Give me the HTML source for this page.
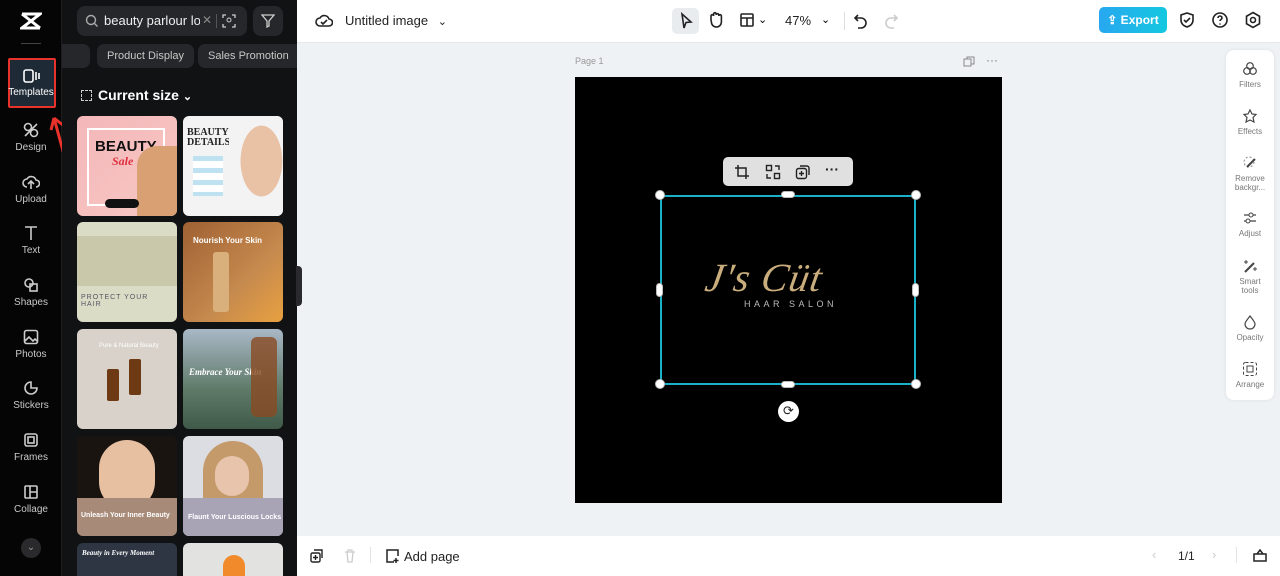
<!DOCTYPE html>
<html style="width:1280px;height:576px;overflow:hidden"><head><meta charset="utf-8"><style>
*{box-sizing:border-box;margin:0;padding:0}
body{width:1280px;height:576px;overflow:hidden;font-family:"Liberation Sans",sans-serif;background:#eff2f5;position:relative}
.abs{position:absolute}
#side{left:0;top:0;width:62px;height:576px;background:#050505;border-right:1px solid #1d1d1d}
.nav{position:absolute;left:0;width:62px;text-align:center;color:#c9c9c9;font-size:10px}
.nav svg{display:block;margin:0 auto 3px}
#panel{left:62px;top:0;width:235px;height:576px;background:#111214;overflow:hidden}
.chip{position:absolute;top:44px;height:24px;border-radius:7px;background:#26272a;color:#c8c8c8;font-size:11px;line-height:24px;padding:0 10px;white-space:nowrap;overflow:hidden}
.th{position:absolute;width:100px;height:100px;border-radius:6px;overflow:hidden}
#top{left:297px;top:0;width:983px;height:43px;background:#fff;border-bottom:1px solid #e6e8eb}
#bot{left:297px;top:536px;width:983px;height:40px;background:#fff}
.ic{stroke:#222;fill:none;stroke-width:1.6}
.rp{position:absolute;left:0;width:48px;text-align:center;font-size:8px;color:#777;line-height:9px}
.rp svg{display:block;margin:0 auto 3px}
.h{position:absolute;background:#fff;border:1px solid #bbb}
</style></head><body>
<div id="side" class="abs">
 <svg class="abs" style="left:20px;top:12px" width="22" height="18" viewBox="0 0 22 18"><path d="M2 2h18L2 16h18M2 2l18 14" stroke="#fff" stroke-width="3" fill="none"/></svg>
 <div class="abs" style="left:21px;top:43px;width:20px;height:1px;background:#444"></div>
 <div class="abs" style="left:8px;top:58px;width:48px;height:50px;background:#1e2a36;border:2px solid #e8322b;border-radius:2px"></div>
 <div class="nav" style="top:68px;color:#fff"><svg width="18" height="16" viewBox="0 0 18 16"><rect x="2" y="2" width="9" height="12" rx="2" stroke="#fff" fill="none" stroke-width="1.6"/><path d="M14 4v8M17 5v6" stroke="#fff" stroke-width="1.6"/></svg>Templates</div>
 <svg class="abs" style="left:48px;top:112px" width="22" height="52" viewBox="0 0 22 52"><path d="M18 50L6 6M6 6l-3 12M6 6l10 8" stroke="#e8322b" stroke-width="3" fill="none"/></svg>
 <div class="nav" style="top:121px">
  <svg width="18" height="18" viewBox="0 0 18 18"><circle cx="6" cy="6" r="3.5" class="ic" style="stroke:#ccc"/><circle cx="12" cy="12" r="3.5" class="ic" style="stroke:#ccc"/><path d="M3 15L15 3" class="ic" style="stroke:#ccc"/></svg>Design</div>
 <div class="nav" style="top:173px"><svg width="18" height="18" viewBox="0 0 18 18"><path d="M5 14a4 4 0 010-8 5 5 0 019 1 3.5 3.5 0 010 7M9 16V9M6 11l3-3 3 3" style="stroke:#ccc" class="ic"/></svg>Upload</div>
 <div class="nav" style="top:224px"><svg width="18" height="18" viewBox="0 0 18 18"><path d="M3 3h12M9 3v13" style="stroke:#ccc" class="ic"/></svg>Text</div>
 <div class="nav" style="top:276px"><svg width="18" height="18" viewBox="0 0 18 18"><circle cx="7" cy="7" r="4" style="stroke:#ccc" class="ic"/><rect x="8" y="8" width="7" height="7" style="stroke:#ccc" class="ic"/></svg>Shapes</div>
 <div class="nav" style="top:328px"><svg width="18" height="18" viewBox="0 0 18 18"><rect x="2.5" y="2.5" width="13" height="13" rx="2" style="stroke:#ccc" class="ic"/><path d="M3 13l4-4 4 4 2-2 2 2" style="stroke:#ccc" class="ic"/></svg>Photos</div>
 <div class="nav" style="top:379px"><svg width="18" height="18" viewBox="0 0 18 18"><path d="M15 9A6 6 0 119 3v6z" style="stroke:#ccc" class="ic"/></svg>Stickers</div>
 <div class="nav" style="top:431px"><svg width="18" height="18" viewBox="0 0 18 18"><rect x="3" y="3" width="12" height="12" rx="2" style="stroke:#ccc" class="ic"/><rect x="6" y="6" width="6" height="6" style="stroke:#ccc" class="ic"/></svg>Frames</div>
 <div class="nav" style="top:483px"><svg width="18" height="18" viewBox="0 0 18 18"><rect x="3" y="3" width="12" height="12" rx="1" style="stroke:#ccc" class="ic"/><path d="M8 3v12M8 9h7" style="stroke:#ccc" class="ic"/></svg>Collage</div>
 <div class="abs" style="left:21px;top:538px;width:20px;height:20px;border-radius:50%;background:#2a2a2c;color:#999;font-size:10px;text-align:center;line-height:20px">⌄</div>
</div>
<div id="panel" class="abs">
 <div class="abs" style="left:15px;top:6px;width:170px;height:30px;border-radius:8px;background:#26272a"></div>
 <div class="abs" style="left:42px;top:6px;width:96px;height:30px;color:#eee;font-size:13px;line-height:30px;white-space:nowrap;overflow:hidden">beauty parlour logo</div>
 <div class="abs" style="left:140px;top:13px;color:#888;font-size:12px">✕</div>
 <svg class="abs" style="left:23px;top:14px" width="14" height="14"><circle cx="6" cy="6" r="4.5" stroke="#aaa" fill="none" stroke-width="1.4"/><path d="M9.5 9.5l3 3" stroke="#aaa" stroke-width="1.4"/></svg>
 <div class="abs" style="left:154px;top:14px;width:1px;height:14px;background:#555"></div>
 <svg class="abs" style="left:160px;top:14px" width="14" height="14"><path d="M1 4V1h3M10 1h3v3M13 10v3h-3M4 13H1v-3" stroke="#ccc" fill="none" stroke-width="1.3"/><circle cx="7" cy="6" r="2" stroke="#ccc" fill="none"/></svg>
 <div class="abs" style="left:191px;top:6px;width:30px;height:30px;border-radius:8px;background:#26272a"></div>
 <svg class="abs" style="left:199px;top:14px" width="14" height="14"><path d="M1 1h12L8 7v5L6 13V7z" stroke="#ccc" fill="none" stroke-width="1.3"/></svg>
 <div class="chip" style="left:0;width:28px;border-radius:0 7px 7px 0"></div>
 <div class="chip" style="left:35px">Product Display</div>
 <div class="chip" style="left:136px;width:99px;border-radius:7px 0 0 7px">Sales Promotion</div>
 <div class="abs" style="left:19px;top:90px;width:11px;height:11px;border:1.5px dashed #ccc"></div>
 <div class="abs" style="left:36px;top:87px;color:#fff;font-size:14px;font-weight:bold">Current size <span style="font-size:11px">⌄</span></div>
 <div class="th" style="left:15px;top:116px;background:linear-gradient(135deg,#f4b7b9,#f7c8c4)"><div style="position:absolute;left:10px;top:12px;width:78px;height:78px;border:2px solid #fff"></div><div style="position:absolute;left:18px;top:22px;font:bold 15px 'Liberation Sans';color:#111">BEAUTY</div><div style="position:absolute;left:35px;top:38px;font:italic bold 12px 'Liberation Serif';color:#e03040">Sale</div><div style="position:absolute;left:60px;top:30px;width:40px;height:70px;background:#d9a173;border-radius:20px 0 0 0"></div><div style="position:absolute;left:28px;top:83px;width:34px;height:9px;background:#111;border-radius:5px"></div></div>
 <div class="th" style="left:121px;top:116px;background:#f3f3f3"><div style="position:absolute;left:4px;top:12px;font:bold 10px 'Liberation Serif';color:#222;line-height:10px">BEAUTY<br>DETAILS</div><div style="position:absolute;left:46px;top:0;width:54px;height:100px;background:radial-gradient(ellipse at 60% 45%,#e9c1a4 0 45%,#f3f3f3 46%)"></div><div style="position:absolute;left:10px;top:40px;width:30px;height:40px;background:repeating-linear-gradient(#bfe2f2 0 5px,#fff 5px 12px)"></div></div>
 <div class="th" style="left:15px;top:222px;background:#dbdcc5"><div style="position:absolute;left:0;top:14px;width:100px;height:50px;background:#c9c8ab"></div><div style="position:absolute;left:4px;top:72px;font-size:7px;color:#556;letter-spacing:1px">PROTECT YOUR<br>HAIR</div></div>
 <div class="th" style="left:121px;top:222px;background:linear-gradient(135deg,#a06033,#c58a4e 60%,#e8a040)"><div style="position:absolute;left:10px;top:14px;font:bold 8px 'Liberation Sans';color:#fff">Nourish Your Skin</div><div style="position:absolute;left:30px;top:30px;width:16px;height:60px;background:#d9b07c;border-radius:3px"></div></div>
 <div class="th" style="left:15px;top:329px;background:#d8d2cb"><div style="position:absolute;left:22px;top:14px;font-size:6px;color:#fff">Pure & Natural Beauty</div><div style="position:absolute;left:30px;top:40px;width:12px;height:32px;background:#6d3a14;border-radius:2px"></div><div style="position:absolute;left:52px;top:30px;width:12px;height:36px;background:#6d3a14;border-radius:2px"></div></div>
 <div class="th" style="left:121px;top:329px;background:linear-gradient(180deg,#a9b8c6,#5f7a69 60%,#3f5a48)"><div style="position:absolute;left:6px;top:38px;font:italic bold 9px 'Liberation Serif';color:#fff">Embrace Your Skin</div><div style="position:absolute;left:68px;top:8px;width:26px;height:80px;background:#8a4a22;border-radius:6px;opacity:.8"></div></div>
 <div class="th" style="left:15px;top:436px;background:#1a1410"><div style="position:absolute;left:22px;top:4px;width:56px;height:70px;border-radius:28px;background:#e7c0a2"></div><div style="position:absolute;left:0;top:62px;width:100px;height:38px;background:#a78a78"></div><div style="position:absolute;left:4px;top:76px;font:bold 7px 'Liberation Sans';color:#fff">Unleash Your Inner Beauty</div></div>
 <div class="th" style="left:121px;top:436px;background:#dcdde3"><div style="position:absolute;left:20px;top:5px;width:60px;height:90px;border-radius:30px;background:#c49a6b"></div><div style="position:absolute;left:32px;top:20px;width:34px;height:40px;border-radius:17px;background:#e8c4ac"></div><div style="position:absolute;left:0;top:62px;width:100px;height:38px;background:#a8a4b6"></div><div style="position:absolute;left:5px;top:78px;font:bold 7px 'Liberation Sans';color:#fff">Flaunt Your Luscious Locks</div></div>
 <div class="th" style="left:15px;top:543px;height:33px;border-radius:6px 6px 0 0;background:#2e3644"><div style="position:absolute;left:5px;top:6px;font:italic bold 7px 'Liberation Serif';color:#fff">Beauty in Every Moment</div></div>
 <div class="th" style="left:121px;top:543px;height:33px;border-radius:6px 6px 0 0;background:#e2e2e0"><div style="position:absolute;left:40px;top:12px;width:22px;height:21px;border-radius:11px 11px 0 0;background:#f08a2a"></div></div>
</div>
<div class="abs" style="left:296px;top:266px;width:6px;height:40px;background:#2a2a2c;border-radius:0 4px 4px 0"></div>
<div id="top" class="abs">
 <svg class="abs" style="left:18px;top:12px" width="18" height="18"><path d="M5 14a4 4 0 010-8 5 5 0 019 1 3.5 3.5 0 010 7z M6 10l2 2 4-4" class="ic"/></svg>
 <div class="abs" style="left:48px;top:13px;font-size:13px;color:#222">Untitled image <span style="font-size:11px;margin-left:6px">⌄</span></div>
 <div class="abs" style="left:375px;top:8px;width:27px;height:26px;border-radius:5px;background:#e9ecef"></div>
 <svg class="abs" style="left:381px;top:12px" width="16" height="18"><path d="M4 2l9 8-5 .5L6 16z" class="ic"/></svg>
 <svg class="abs" style="left:410px;top:11px" width="16" height="18"><path d="M4 9V5a1.3 1.3 0 012.6 0V3a1.3 1.3 0 012.6 0v1a1.3 1.3 0 012.6 0v1a1.3 1.3 0 012.6 0v6a5 5 0 01-10 0z" class="ic"/></svg>
 <svg class="abs" style="left:442px;top:12px" width="16" height="16"><rect x="2" y="2" width="12" height="12" rx="1" class="ic"/><path d="M2 6h12M8 6v8" class="ic"/></svg>
 <div class="abs" style="left:461px;top:13px;font-size:11px">⌄</div>
 <div class="abs" style="left:488px;top:13px;font-size:13px;color:#222">47%</div>
 <div class="abs" style="left:524px;top:13px;font-size:11px">⌄</div>
 <div class="abs" style="left:547px;top:12px;width:1px;height:18px;background:#ddd"></div>
 <svg class="abs" style="left:556px;top:12px" width="16" height="18"><path d="M5 3L2 6l3 3M2 6h6a5 5 0 010 10H5" class="ic"/></svg>
 <svg class="abs" style="left:586px;top:12px" width="16" height="18"><path d="M11 3l3 3-3 3M14 6H8a5 5 0 000 10h3" class="ic" style="stroke:#ccc"/></svg>
 <div class="abs" style="left:802px;top:7px;width:68px;height:26px;border-radius:5px;background:linear-gradient(90deg,#28a7f0,#14c8e0);color:#fff;font-size:12px;font-weight:bold;line-height:26px;text-align:center">⇪ Export</div>
 <svg class="abs" style="left:881px;top:11px" width="18" height="18"><path d="M9 2l6 2v5c0 4-3 6-6 7-3-1-6-3-6-7V4z M6 9l2 2 4-4" class="ic"/></svg>
 <svg class="abs" style="left:914px;top:11px" width="18" height="18"><circle cx="9" cy="9" r="7" class="ic"/><path d="M7 7a2 2 0 114 0c0 1.5-2 1.5-2 3" class="ic"/><circle cx="9" cy="13" r=".8" fill="#222"/></svg>
 <svg class="abs" style="left:947px;top:11px" width="18" height="18"><path d="M9 1.5l6.5 3.75v7.5L9 16.5 2.5 12.750v-7.5z" class="ic"/><circle cx="9" cy="9" r="2.5" class="ic"/></svg>
</div>
<div class="abs" style="left:575px;top:56px;font-size:9px;color:#999">Page 1</div>
<svg class="abs" style="left:963px;top:56px" width="12" height="12"><rect x="1" y="3" width="7" height="7" stroke="#888" fill="none"/><path d="M4 3V1h7v7H8" stroke="#888" fill="none"/></svg>
<div class="abs" style="left:986px;top:53px;font-size:12px;color:#777">···</div>
<div class="abs" style="left:575px;top:77px;width:427px;height:426px;background:#000"></div>
<div class="abs" style="left:723px;top:157px;width:130px;height:29px;background:#e0e0e0;border-radius:5px"></div>
<svg class="abs" style="left:734px;top:164px" width="16" height="16"><path d="M4 1v11h11M1 4h11v11" stroke="#222" fill="none" stroke-width="1.5"/></svg>
<svg class="abs" style="left:765px;top:164px" width="16" height="16"><rect x="1.5" y="1.5" width="5" height="5" stroke="#222" fill="none" stroke-width="1.4"/><rect x="9.5" y="9.5" width="5" height="5" stroke="#222" fill="none" stroke-width="1.4"/><path d="M10 2h4v4M2 10v4h4" stroke="#222" fill="none" stroke-width="1.4"/></svg>
<svg class="abs" style="left:795px;top:164px" width="16" height="16"><rect x="1.5" y="4.5" width="10" height="10" rx="2" stroke="#222" fill="none" stroke-width="1.4"/><path d="M5 2h7a2 2 0 012 2v7M6.5 7v5M4 9.5h5" stroke="#222" fill="none" stroke-width="1.4"/></svg>
<div class="abs" style="left:825px;top:161px;font-size:14px;font-weight:bold;color:#222">···</div>
<div class="abs" style="left:660px;top:195px;width:256px;height:190px;border:2px solid #1ab0c8"></div>
<div class="abs" style="left:655px;top:190px;width:10px;height:10px;border-radius:50%;background:#fff;border:1px solid #bbb"></div>
<div class="abs" style="left:911px;top:190px;width:10px;height:10px;border-radius:50%;background:#fff;border:1px solid #bbb"></div>
<div class="abs" style="left:655px;top:379px;width:10px;height:10px;border-radius:50%;background:#fff;border:1px solid #bbb"></div>
<div class="abs" style="left:911px;top:379px;width:10px;height:10px;border-radius:50%;background:#fff;border:1px solid #bbb"></div>
<div class="h" style="left:781px;top:191px;width:14px;height:7px;border-radius:4px"></div>
<div class="h" style="left:781px;top:381px;width:14px;height:7px;border-radius:4px"></div>
<div class="h" style="left:656px;top:283px;width:7px;height:14px;border-radius:4px"></div>
<div class="h" style="left:912px;top:283px;width:7px;height:14px;border-radius:4px"></div>
<div class="abs" style="left:706px;top:254px;font:italic 40px 'Liberation Serif';color:#c9ad7c;letter-spacing:1px;transform:skewX(-10deg)">J's Cüt</div>
<div class="abs" style="left:744px;top:299px;font-size:9px;color:#bbb;letter-spacing:3.5px">HAAR SALON</div>
<div class="abs" style="left:778px;top:401px;width:21px;height:21px;border-radius:50%;background:#fff;text-align:center;line-height:20px;font-size:13px;color:#222">⟳</div>
<div class="abs" style="left:1226px;top:50px;width:48px;height:350px;background:#fff;border-radius:8px;box-shadow:0 0 4px rgba(0,0,0,.08)">
 <div class="rp" style="top:11px"><svg width="16" height="16"><circle cx="8" cy="5" r="3.3" stroke="#444" fill="none" stroke-width="1.2"/><circle cx="5" cy="10" r="3.3" stroke="#444" fill="none" stroke-width="1.2"/><circle cx="11" cy="10" r="3.3" stroke="#444" fill="none" stroke-width="1.2"/></svg>Filters</div>
 <div class="rp" style="top:58px"><svg width="16" height="16"><path d="M8 2l2 4 4 .5-3 3 1 4.5-4-2-4 2 1-4.5-3-3 4-.5z" stroke="#444" fill="none" stroke-width="1.2"/></svg>Effects</div>
 <div class="rp" style="top:105px"><svg width="16" height="16"><circle cx="7" cy="7" r="5" stroke="#888" fill="none" stroke-dasharray="2 2"/><path d="M5 12l8-8" stroke="#444" stroke-width="2"/></svg>Remove<br>backgr...</div>
 <div class="rp" style="top:160px"><svg width="16" height="16"><path d="M2 5h12M2 11h12" stroke="#444" stroke-width="1.2"/><circle cx="9" cy="5" r="2" fill="#fff" stroke="#444"/><circle cx="6" cy="11" r="2" fill="#fff" stroke="#444"/></svg>Adjust</div>
 <div class="rp" style="top:208px"><svg width="16" height="16"><path d="M3 14l9-9" stroke="#444" stroke-width="2"/><path d="M4 2v4M2 4h4M13 9v4M11 11h4" stroke="#444"/></svg>Smart<br>tools</div>
 <div class="rp" style="top:264px"><svg width="16" height="16"><path d="M8 2c3 4 5 6 5 8a5 5 0 01-10 0c0-2 2-4 5-8z" stroke="#444" fill="none" stroke-width="1.2"/></svg>Opacity</div>
 <div class="rp" style="top:311px"><svg width="16" height="16"><rect x="1.5" y="1.5" width="13" height="13" rx="2" stroke="#444" fill="none" stroke-dasharray="3 2"/><rect x="5" y="5" width="6" height="6" stroke="#444" fill="none"/></svg>Arrange</div>
</div>
<div id="bot" class="abs">
 <svg class="abs" style="left:13px;top:13px" width="14" height="14"><rect x="1" y="4" width="9" height="9" rx="1.5" stroke="#222" fill="none" stroke-width="1.4"/><path d="M4 1h8v8M5.5 6v5M3 8.5h5" stroke="#222" fill="none" stroke-width="1.4"/></svg>
 <svg class="abs" style="left:47px;top:13px" width="12" height="14"><path d="M1 3h10M3 3l1 10h4l1-10M4 3V1h4v2" stroke="#ccc" fill="none" stroke-width="1.3"/></svg>
 <div class="abs" style="left:73px;top:11px;width:1px;height:16px;background:#e3e3e3"></div>
 <svg class="abs" style="left:88px;top:12px" width="16" height="16"><path d="M13 8V2H2v12h7M11 10v5M8.5 12.5h5" stroke="#222" fill="none" stroke-width="1.5"/></svg>
 <div class="abs" style="left:107px;top:13px;font-size:13px;color:#222">Add page</div>
 <div class="abs" style="left:855px;top:11px;font-size:13px;color:#ccc">‹</div>
 <div class="abs" style="left:881px;top:13px;font-size:12px;color:#222">1/1</div>
 <div class="abs" style="left:915px;top:11px;font-size:13px;color:#ccc">›</div>
 <div class="abs" style="left:939px;top:11px;width:1px;height:16px;background:#e3e3e3"></div>
 <svg class="abs" style="left:956px;top:12px" width="14" height="14"><rect x="1" y="6" width="12" height="7" stroke="#222" fill="none" stroke-width="1.5"/><path d="M4 6l3-4 3 4" stroke="#222" fill="none" stroke-width="1.5"/></svg>
</div>
</body></html>
